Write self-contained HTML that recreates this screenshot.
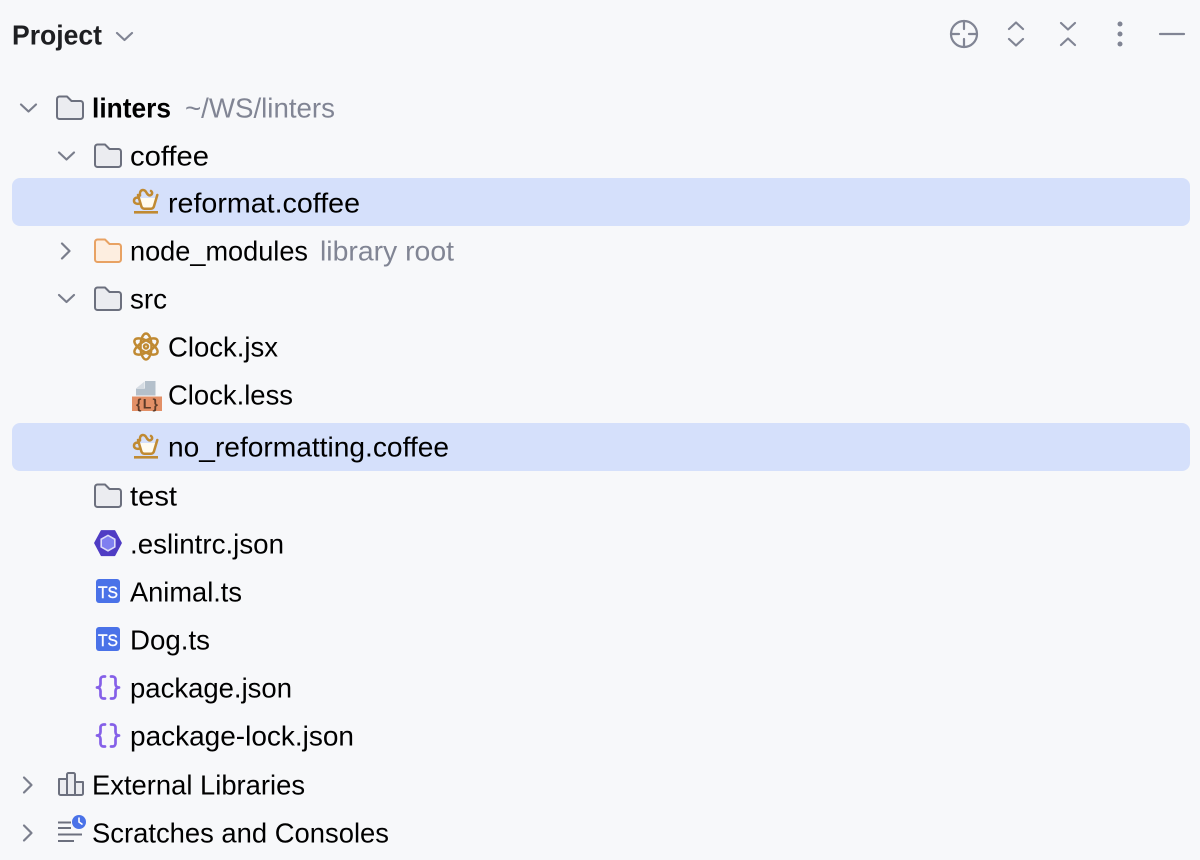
<!DOCTYPE html>
<html><head><meta charset="utf-8"><style>
html,body{margin:0;padding:0;background:#f7f8fa;width:1200px;height:860px;overflow:hidden}
svg{display:block}
text{font-family:"Liberation Sans",sans-serif;font-size:27.5px;fill:#000}
.i{fill:none;stroke:#818594;stroke-width:2.2;stroke-linecap:round;stroke-linejoin:round}
.f{fill:#ebecf0;stroke:#6c707e;stroke-width:2;stroke-linejoin:round}
.c{fill:none;stroke:#7a7e8c;stroke-width:2.2;stroke-linecap:round;stroke-linejoin:round}
.o{fill:#fdeee0;stroke:#e8a263;stroke-width:2;stroke-linejoin:round}
.b{fill:none;stroke:#8560e8;stroke-width:2.7;stroke-linecap:round;stroke-linejoin:round}
.r{fill:none;stroke:#c08a32;stroke-width:2.500;stroke-linecap:round;stroke-linejoin:round}
</style></head><body>
<svg width="1200" height="860" viewBox="0 0 1200 860" xmlns="http://www.w3.org/2000/svg">
<rect width="1200" height="860" fill="#f7f8fa"/>
<rect x="12" y="178" width="1178" height="48" rx="8" fill="#d5e0fb"/>
<rect x="12" y="423" width="1178" height="48" rx="8" fill="#d5e0fb"/>

<path class="i" d="M117 33l7.500 7 7.500-7"/>

<circle class="i" cx="964" cy="34" r="13"/>
<path class="i" d="M964 21v8M964 39v8M951 34h8M969 34h8"/>
<path class="i" d="M1009 29l7-6.500 7 6.500M1009 39l7 6.500 7-6.500"/>
<path class="i" d="M1061 23l7 6.500 7-6.500M1061 45l7-6.500 7 6.500"/>
<circle cx="1120" cy="24" r="2.500" fill="#818594"/><circle cx="1120" cy="34" r="2.500" fill="#818594"/><circle cx="1120" cy="44" r="2.500" fill="#818594"/>
<path class="i" d="M1160 34h24"/>

<!-- chevrons -->
<path class="c" d="M21 104.500l7.500 7 7.500-7"/>
<path class="c" d="M59 152.500l7.500 7 7.500-7"/>
<path class="c" d="M62 243.500l7.500 7.500-7.500 7.500"/>
<path class="c" d="M59 295l7.500 7 7.500-7"/>
<path class="c" d="M24 777.500l7.500 7.500-7.500 7.500"/>
<path class="c" d="M24 825.500l7.500 7.500-7.500 7.500"/>

<!-- folders -->
<path class="f" transform="translate(57,96)" d="M0 3a2.500 2.500 0 0 1 2.500-2.500H10L14.500 5H23.500A2.500 2.500 0 0 1 26 7.500V20.500A2.500 2.500 0 0 1 23.500 23H2.500A2.500 2.500 0 0 1 0 20.500Z"/>
<path class="f" transform="translate(95,144)" d="M0 3a2.500 2.500 0 0 1 2.500-2.500H10L14.500 5H23.500A2.500 2.500 0 0 1 26 7.500V20.500A2.500 2.500 0 0 1 23.500 23H2.500A2.500 2.500 0 0 1 0 20.500Z"/>
<path class="o" transform="translate(95,239)" d="M0 3a2.500 2.500 0 0 1 2.500-2.500H10L14.500 5H23.500A2.500 2.500 0 0 1 26 7.500V20.500A2.500 2.500 0 0 1 23.500 23H2.500A2.500 2.500 0 0 1 0 20.500Z"/>
<path class="f" transform="translate(95,287)" d="M0 3a2.500 2.500 0 0 1 2.500-2.500H10L14.500 5H23.500A2.500 2.500 0 0 1 26 7.500V20.500A2.500 2.500 0 0 1 23.500 23H2.500A2.500 2.500 0 0 1 0 20.500Z"/>
<path class="f" transform="translate(95,484)" d="M0 3a2.500 2.500 0 0 1 2.500-2.500H10L14.500 5H23.500A2.500 2.500 0 0 1 26 7.500V20.500A2.500 2.500 0 0 1 23.500 23H2.500A2.500 2.500 0 0 1 0 20.500Z"/>

<!-- coffee icons -->
<g>
<path d="M139.500 198h16l-2.500 8.500a2.500 2.500 0 0 1-2.500 2h-6.500a2.500 2.500 0 0 1-2.500-2Z" fill="#fffbf0"/>
<path class="r" d="M138 195l3.400 11.500a3 3 0 0 0 3 2.200h6.500a3 3 0 0 0 3-2.200l3.400-11.500"/>
<path class="r" d="M140 195.500c-.5-3 .5-5.500 3-5.500s3 2 4 3.500 2.500 2.500 4 1.500 1.500-3 0-4"/>
<path class="r" d="M138.800 198c-3-1-4.800 .5-4.800 2.700s2.300 3.800 5.800 2.800"/>
<rect x="134" y="211" width="24" height="2.600" fill="#c08a32"/>
</g>
<g transform="translate(0,245)">
<path d="M139.500 198h16l-2.500 8.500a2.500 2.500 0 0 1-2.500 2h-6.500a2.500 2.500 0 0 1-2.500-2Z" fill="#fffbf0"/>
<path class="r" d="M138 195l3.400 11.500a3 3 0 0 0 3 2.200h6.500a3 3 0 0 0 3-2.200l3.400-11.500"/>
<path class="r" d="M140 195.500c-.5-3 .5-5.500 3-5.500s3 2 4 3.500 2.500 2.500 4 1.500 1.500-3 0-4"/>
<path class="r" d="M138.800 198c-3-1-4.800 .5-4.800 2.700s2.300 3.800 5.800 2.800"/>
<rect x="134" y="211" width="24" height="2.600" fill="#c08a32"/>
</g>

<!-- react -->
<g class="r" transform="translate(146,346.500)">
<ellipse rx="13" ry="5.500" transform="rotate(90)"/>
<ellipse rx="13" ry="5.500" transform="rotate(30)"/>
<ellipse rx="13" ry="5.500" transform="rotate(-30)"/>
<circle r="3.200" fill="#c08a32" stroke="none"/>
<circle r="1" fill="#f0dcb8" stroke="none"/>
</g>

<!-- less -->
<path d="M145 381h10.500v14.500H136V388.500h9Z" fill="#b4c0cb"/>
<path d="M136.500 388l8-6.500v6.500Z" fill="#d5dce3"/>
<rect x="132" y="396.500" width="30" height="14.500" fill="#e28f66"/>
<text x="136" y="408.500" textLength="22" style="font-size:14px;font-weight:700;fill:#5b3a28">{L}</text>

<!-- eslint -->
<path d="M101.500 531h13l6.500 12-6.500 12.200H101.500L95 543Z" fill="#4f3cc4" stroke="#4f3cc4" stroke-width="1.800" stroke-linejoin="round"/>
<path d="M108 534.500l7.600 4.300v8.600l-7.600 4.300-7.600-4.300v-8.600Z" fill="#dcdcf8"/>
<path d="M108 536.300l6 3.400v6.800l-6 3.400-6-3.400v-6.800Z" fill="#7f7ff0"/>

<!-- TS -->
<rect x="96" y="579" width="24" height="24" rx="3" fill="#4a72e8"/>
<text x="98" y="598" textLength="20" lengthAdjust="spacingAndGlyphs" stroke="#fff" stroke-width=".4" style="font-size:17px;fill:#fff">TS</text>
<rect x="96" y="627" width="24" height="24" rx="3" fill="#4a72e8"/>
<text x="98" y="646" textLength="20" lengthAdjust="spacingAndGlyphs" stroke="#fff" stroke-width=".4" style="font-size:17px;fill:#fff">TS</text>

<!-- JSON braces -->
<path class="b" d="M105 676.500h-1.500a3 3 0 0 0-3 3v4.500c0 2-1.500 3.500-3.500 3.500 2 0 3.500 1.500 3.500 3.500v4.500a3 3 0 0 0 3 3h1.500M111 676.500h1.500a3 3 0 0 1 3 3v4.500c0 2 1.500 3.500 3.500 3.500-2 0-3.500 1.500-3.500 3.500v4.500a3 3 0 0 1-3 3h-1.500"/>
<path class="b" transform="translate(0,48)" d="M105 676.500h-1.500a3 3 0 0 0-3 3v4.500c0 2-1.500 3.500-3.500 3.500 2 0 3.500 1.500 3.500 3.500v4.500a3 3 0 0 0 3 3h1.500M111 676.500h1.500a3 3 0 0 1 3 3v4.500c0 2 1.500 3.500 3.500 3.500-2 0-3.500 1.500-3.500 3.500v4.500a3 3 0 0 1-3 3h-1.500"/>

<!-- libraries -->
<path class="f" d="M59 779h8v16h-6.500a1.500 1.500 0 0 1-1.500-1.500Z"/>
<path class="f" d="M67 774.500a1.500 1.500 0 0 1 1.500-1.500h5a1.500 1.500 0 0 1 1.500 1.500V795h-8Z"/>
<path class="f" d="M75 782h8v11.500a1.500 1.500 0 0 1-1.500 1.500H75Z"/>

<!-- scratches -->
<path d="M58 822.500h13M58 828h13M58 834.500h24M58 841h16" stroke="#6c707e" stroke-width="2" fill="none"/>
<circle cx="79" cy="822" r="7" fill="#4a72e8"/>
<path d="M79 817.500v4.500l3.500 2.500" stroke="#fff" stroke-width="1.600" fill="none"/>

<!-- labels -->
<g transform="translate(0,.5)">
<text x="12" y="44" textLength="90" lengthAdjust="spacingAndGlyphs" style="fill:#1e1f22;font-weight:700">Project</text>
<text x="92" y="117" textLength="79" lengthAdjust="spacingAndGlyphs" style="font-weight:700">linters</text>
<text x="185" y="117" textLength="150" lengthAdjust="spacingAndGlyphs" style="fill:#818594">~/WS/linters</text>
<text x="130" y="165" textLength="79" lengthAdjust="spacingAndGlyphs">coffee</text>
<text x="168" y="212" textLength="192" lengthAdjust="spacingAndGlyphs">reformat.coffee</text>
<text x="130" y="260" textLength="178" lengthAdjust="spacingAndGlyphs">node_modules</text>
<text x="320" y="260" textLength="134" lengthAdjust="spacingAndGlyphs" style="fill:#818594">library root</text>
<text x="130" y="308" textLength="37" lengthAdjust="spacingAndGlyphs">src</text>
<text x="168" y="356" textLength="110" lengthAdjust="spacingAndGlyphs">Clock.jsx</text>
<text x="168" y="404" textLength="125" lengthAdjust="spacingAndGlyphs">Clock.less</text>
<text x="168" y="456" textLength="281" lengthAdjust="spacingAndGlyphs">no_reformatting.coffee</text>
<text x="130" y="505" textLength="47" lengthAdjust="spacingAndGlyphs">test</text>
<text x="130" y="553" textLength="154" lengthAdjust="spacingAndGlyphs">.eslintrc.json</text>
<text x="130" y="601" textLength="112" lengthAdjust="spacingAndGlyphs">Animal.ts</text>
<text x="130" y="649" textLength="80" lengthAdjust="spacingAndGlyphs">Dog.ts</text>
<text x="130" y="697" textLength="162" lengthAdjust="spacingAndGlyphs">package.json</text>
<text x="130" y="745" textLength="224" lengthAdjust="spacingAndGlyphs">package-lock.json</text>
<text x="92" y="794" textLength="213" lengthAdjust="spacingAndGlyphs">External Libraries</text>
<text x="92" y="842" textLength="297" lengthAdjust="spacingAndGlyphs">Scratches and Consoles</text>
</g>
</svg>
</body></html>
